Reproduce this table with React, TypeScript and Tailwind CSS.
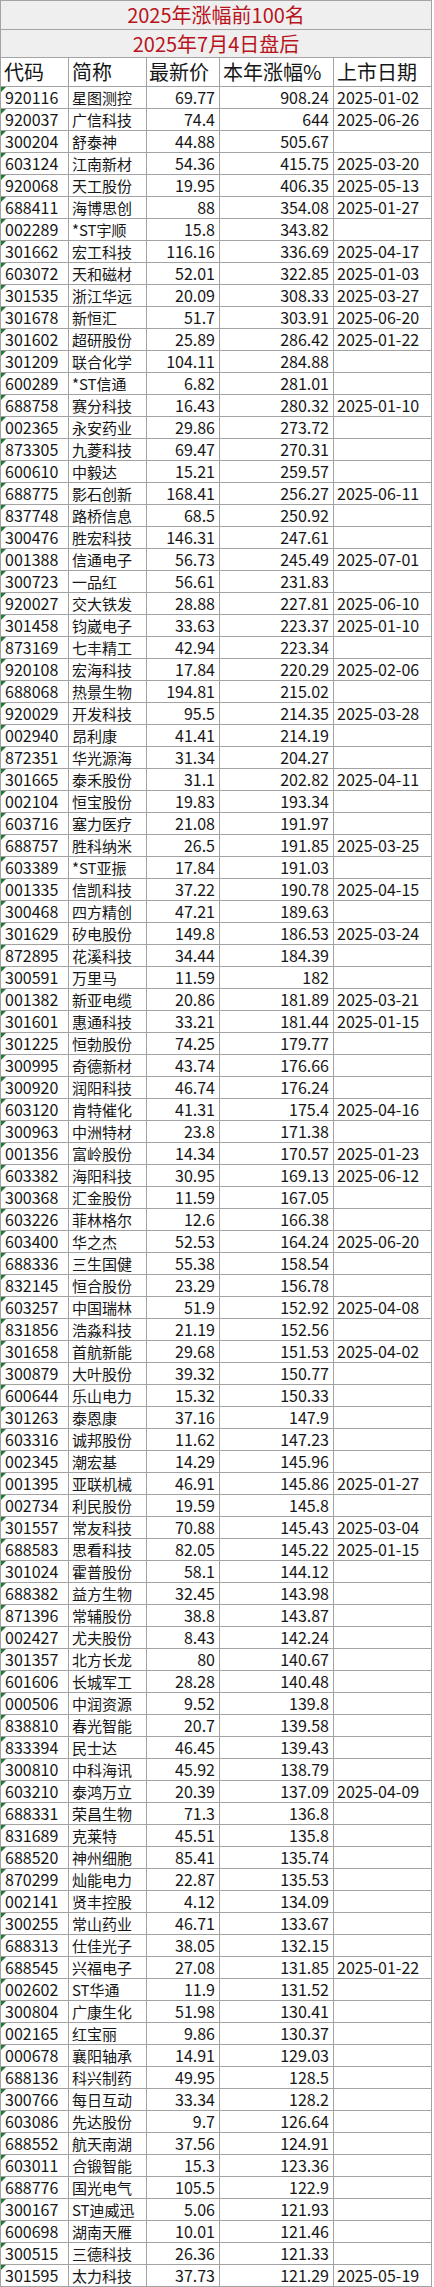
import React from "react";

type Row = [string, string, string, string, string];

const rows: Row[] = [
  ["920116", "星图测控", "69.77", "908.24", "2025-01-02"],
  ["920037", "广信科技", "74.4", "644", "2025-06-26"],
  ["300204", "舒泰神", "44.88", "505.67", ""],
  ["603124", "江南新材", "54.36", "415.75", "2025-03-20"],
  ["920068", "天工股份", "19.95", "406.35", "2025-05-13"],
  ["688411", "海博思创", "88", "354.08", "2025-01-27"],
  ["002289", "*ST宇顺", "15.8", "343.82", ""],
  ["301662", "宏工科技", "116.16", "336.69", "2025-04-17"],
  ["603072", "天和磁材", "52.01", "322.85", "2025-01-03"],
  ["301535", "浙江华远", "20.09", "308.33", "2025-03-27"],
  ["301678", "新恒汇", "51.7", "303.91", "2025-06-20"],
  ["301602", "超研股份", "25.89", "286.42", "2025-01-22"],
  ["301209", "联合化学", "104.11", "284.88", ""],
  ["600289", "*ST信通", "6.82", "281.01", ""],
  ["688758", "赛分科技", "16.43", "280.32", "2025-01-10"],
  ["002365", "永安药业", "29.86", "273.72", ""],
  ["873305", "九菱科技", "69.47", "270.31", ""],
  ["600610", "中毅达", "15.21", "259.57", ""],
  ["688775", "影石创新", "168.41", "256.27", "2025-06-11"],
  ["837748", "路桥信息", "68.5", "250.92", ""],
  ["300476", "胜宏科技", "146.31", "247.61", ""],
  ["001388", "信通电子", "56.73", "245.49", "2025-07-01"],
  ["300723", "一品红", "56.61", "231.83", ""],
  ["920027", "交大铁发", "28.88", "227.81", "2025-06-10"],
  ["301458", "钧崴电子", "33.63", "223.37", "2025-01-10"],
  ["873169", "七丰精工", "42.94", "223.34", ""],
  ["920108", "宏海科技", "17.84", "220.29", "2025-02-06"],
  ["688068", "热景生物", "194.81", "215.02", ""],
  ["920029", "开发科技", "95.5", "214.35", "2025-03-28"],
  ["002940", "昂利康", "41.41", "214.19", ""],
  ["872351", "华光源海", "31.34", "204.27", ""],
  ["301665", "泰禾股份", "31.1", "202.82", "2025-04-11"],
  ["002104", "恒宝股份", "19.83", "193.34", ""],
  ["603716", "塞力医疗", "21.08", "191.97", ""],
  ["688757", "胜科纳米", "26.5", "191.85", "2025-03-25"],
  ["603389", "*ST亚振", "17.84", "191.03", ""],
  ["001335", "信凯科技", "37.22", "190.78", "2025-04-15"],
  ["300468", "四方精创", "47.21", "189.63", ""],
  ["301629", "矽电股份", "149.8", "186.53", "2025-03-24"],
  ["872895", "花溪科技", "34.44", "184.39", ""],
  ["300591", "万里马", "11.59", "182", ""],
  ["001382", "新亚电缆", "20.86", "181.89", "2025-03-21"],
  ["301601", "惠通科技", "33.21", "181.44", "2025-01-15"],
  ["301225", "恒勃股份", "74.25", "179.77", ""],
  ["300995", "奇德新材", "43.74", "176.66", ""],
  ["300920", "润阳科技", "46.74", "176.24", ""],
  ["603120", "肯特催化", "41.31", "175.4", "2025-04-16"],
  ["300963", "中洲特材", "23.8", "171.38", ""],
  ["001356", "富岭股份", "14.34", "170.57", "2025-01-23"],
  ["603382", "海阳科技", "30.95", "169.13", "2025-06-12"],
  ["300368", "汇金股份", "11.59", "167.05", ""],
  ["603226", "菲林格尔", "12.6", "166.38", ""],
  ["603400", "华之杰", "52.53", "164.24", "2025-06-20"],
  ["688336", "三生国健", "55.38", "158.54", ""],
  ["832145", "恒合股份", "23.29", "156.78", ""],
  ["603257", "中国瑞林", "51.9", "152.92", "2025-04-08"],
  ["831856", "浩淼科技", "21.19", "152.56", ""],
  ["301658", "首航新能", "29.68", "151.53", "2025-04-02"],
  ["300879", "大叶股份", "39.32", "150.77", ""],
  ["600644", "乐山电力", "15.32", "150.33", ""],
  ["301263", "泰恩康", "37.16", "147.9", ""],
  ["603316", "诚邦股份", "11.62", "147.23", ""],
  ["002345", "潮宏基", "14.29", "145.96", ""],
  ["001395", "亚联机械", "46.91", "145.86", "2025-01-27"],
  ["002734", "利民股份", "19.59", "145.8", ""],
  ["301557", "常友科技", "70.88", "145.43", "2025-03-04"],
  ["688583", "思看科技", "82.05", "145.22", "2025-01-15"],
  ["301024", "霍普股份", "58.1", "144.12", ""],
  ["688382", "益方生物", "32.45", "143.98", ""],
  ["871396", "常辅股份", "38.8", "143.87", ""],
  ["002427", "尤夫股份", "8.43", "142.24", ""],
  ["301357", "北方长龙", "80", "140.67", ""],
  ["601606", "长城军工", "28.28", "140.48", ""],
  ["000506", "中润资源", "9.52", "139.8", ""],
  ["838810", "春光智能", "20.7", "139.58", ""],
  ["833394", "民士达", "46.45", "139.43", ""],
  ["300810", "中科海讯", "45.92", "138.79", ""],
  ["603210", "泰鸿万立", "20.39", "137.09", "2025-04-09"],
  ["688331", "荣昌生物", "71.3", "136.8", ""],
  ["831689", "克莱特", "45.51", "135.8", ""],
  ["688520", "神州细胞", "85.41", "135.74", ""],
  ["870299", "灿能电力", "22.87", "135.53", ""],
  ["002141", "贤丰控股", "4.12", "134.09", ""],
  ["300255", "常山药业", "46.71", "133.67", ""],
  ["688313", "仕佳光子", "38.05", "132.15", ""],
  ["688545", "兴福电子", "27.08", "131.85", "2025-01-22"],
  ["002602", "ST华通", "11.9", "131.52", ""],
  ["300804", "广康生化", "51.98", "130.41", ""],
  ["002165", "红宝丽", "9.86", "130.37", ""],
  ["000678", "襄阳轴承", "14.91", "129.03", ""],
  ["688136", "科兴制药", "49.95", "128.5", ""],
  ["300766", "每日互动", "33.34", "128.2", ""],
  ["603086", "先达股份", "9.7", "126.64", ""],
  ["688552", "航天南湖", "37.56", "124.91", ""],
  ["603011", "合锻智能", "15.3", "123.36", ""],
  ["688776", "国光电气", "105.5", "122.9", ""],
  ["300167", "ST迪威迅", "5.06", "121.93", ""],
  ["600698", "湖南天雁", "10.01", "121.46", ""],
  ["300515", "三德科技", "26.36", "121.33", ""],
  ["301595", "太力科技", "37.73", "121.29", "2025-05-19"],
];

const cell = "border border-[#a3a3a3] p-0 align-middle whitespace-nowrap overflow-hidden";

export default function App() {
  return (
    <div className="w-[434px] min-h-[2287px] bg-white font-['Noto_Sans_CJK_SC','Noto_Sans',sans-serif] text-[#161616]">
      <table className="table-fixed border-collapse w-[431px]">
        <colgroup>
          <col className="w-[68px]" />
          <col className="w-[78px]" />
          <col className="w-[73px]" />
          <col className="w-[114px]" />
          <col className="w-[98px]" />
        </colgroup>
        <thead>
          <tr className="h-[29px]">
            <th
              colSpan={5}
              className={`${cell} bg-[#efefef] text-center text-[20px] leading-[28px] font-normal text-[#b8141c]`}
            >
              2025年涨幅前100名
            </th>
          </tr>
          <tr className="h-[28px]">
            <th
              colSpan={5}
              className={`${cell} bg-[#efefef] text-center text-[20px] leading-[27px] font-normal text-[#b8141c]`}
            >
              2025年7月4日盘后
            </th>
          </tr>
          <tr className="h-[29px] text-[20px] leading-[28px] font-normal">
            <th className={`${cell} text-left pl-[3px] font-normal`}>代码</th>
            <th className={`${cell} text-left pl-[3px] font-normal`}>简称</th>
            <th className={`${cell} text-left pl-[2px] font-normal`}>最新价</th>
            <th className={`${cell} text-left pl-[3px] font-normal`}>本年涨幅%</th>
            <th className={`${cell} text-left pl-[3px] font-normal`}>上市日期</th>
          </tr>
        </thead>
        <tbody>
          {rows.map((r) => (
            <tr key={r[0]} className="h-[22px] text-[16px] leading-[21px]">
              <td className={`${cell} relative pl-[4px]`}>
                <span className="absolute left-0 top-0 w-0 h-0 border-t-[5px] border-t-[#1f7a36] border-r-[5px] border-r-transparent" />
                {r[0]}
              </td>
              <td className={`${cell} pl-[3px] text-[15px]`}>{r[1]}</td>
              <td className={`${cell} text-right pr-[4px]`}>{r[2]}</td>
              <td className={`${cell} text-right pr-[4px]`}>{r[3]}</td>
              <td className={`${cell} pl-[3px]`}>{r[4]}</td>
            </tr>
          ))}
        </tbody>
      </table>
    </div>
  );
}
